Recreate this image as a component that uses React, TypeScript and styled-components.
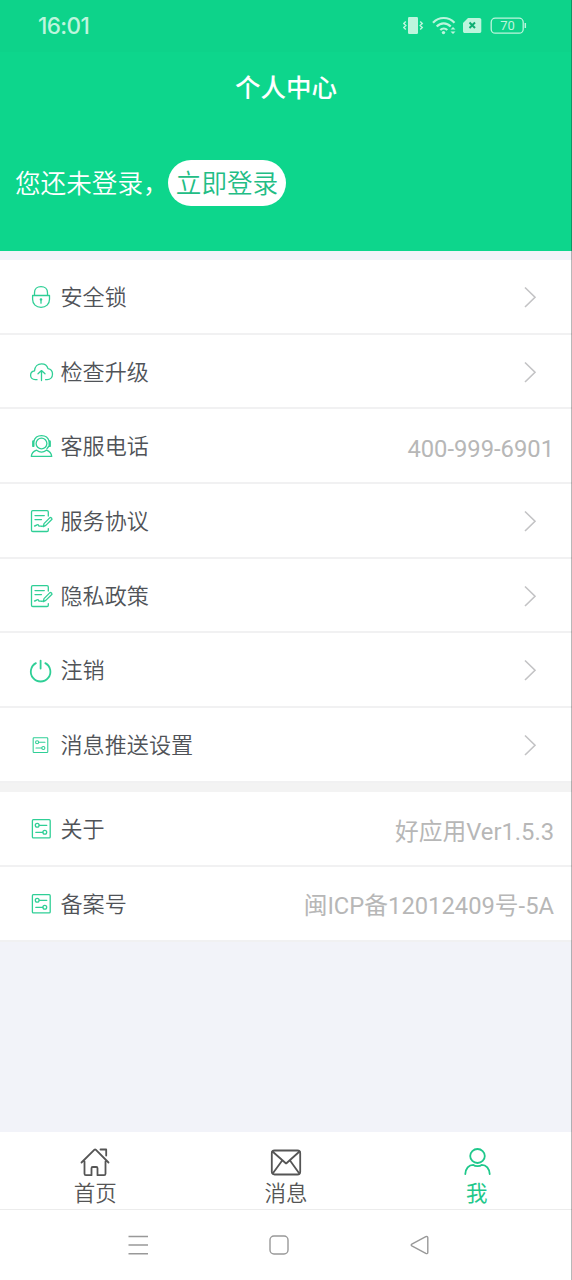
import React from 'react';
import styled, { createGlobalStyle } from 'styled-components';

const GREEN = '#0dd68c';
const ICON_GREEN = '#2fcf96';

const GlobalStyle = createGlobalStyle`
  * { box-sizing: border-box; }
  body {
    margin: 0;
    background: #f2f3f9;
    font-family: Roboto, 'Noto Sans CJK SC', sans-serif;
  }
`;

const Screen = styled.div`
  position: relative;
  display: flex;
  flex-direction: column;
  width: 572px;
  height: 1280px;
  overflow: hidden;
  background: #f2f3f9;
`;

const ScreenEdge = styled.div`
  position: absolute;
  top: 0;
  right: 0;
  width: 1px;
  height: 100%;
  background: rgba(0, 0, 0, 0.28);
`;

const Header = styled.header`
  display: flex;
  flex-direction: column;
  height: 251px;
  flex: none;
  background: ${GREEN};
  color: #fff;
`;

const StatusBar = styled.div`
  display: flex;
  align-items: center;
  justify-content: space-between;
  height: 52px;
  padding: 0 45px 0 38px;
  background: #0dd38a;
  color: #bdf5dd;
`;

const Clock = styled.span`
  font: 500 22.5px/26px Inter, sans-serif;
  letter-spacing: -0.6px;
`;

const StatusIcons = styled.svg`
  display: block;
  width: 124px;
  height: 24px;
`;

const Title = styled.h1`
  margin: 0;
  height: 72px;
  text-align: center;
  font-size: 25.5px;
  line-height: 73px;
  font-weight: 500;
`;

const LoginRow = styled.div`
  display: flex;
  align-items: center;
  height: 46px;
  margin-top: 36px;
  padding-left: 15px;
  font-size: 25.6px;
`;

const LoginHint = styled.span`
  width: 153px;
  padding-bottom: 3px;
  white-space: nowrap;
  font-weight: 350;
`;

const LoginButton = styled.button`
  width: 118px;
  height: 46px;
  padding: 0;
  border: 0;
  border-radius: 23px;
  background: #fff;
  color: #22bd85;
  font: inherit;
  font-weight: 350;
  line-height: 48px;
`;

const Group = styled.section<{ $gap: string; $space: number }>`
  padding-top: ${(p) => p.$space}px;
  background: ${(p) => p.$gap};
`;

const Row = styled.div`
  display: flex;
  align-items: center;
  height: 74.7px;
  padding: 1px 18px 0 28px;
  border-bottom: 2px solid #f1f1f2;
  background: #fff;
`;

const RowIcon = styled.svg`
  width: 26px;
  height: 26px;
  margin-right: 6.5px;
  fill: none;
  stroke: ${ICON_GREEN};
  stroke-width: 1.3;
  stroke-linecap: round;
  stroke-linejoin: round;
`;

const Label = styled.span`
  flex: 1;
  color: #505358;
  font-size: 22.1px;
  font-weight: 350;
  line-height: 30px;
`;

const Value = styled.span`
  padding-top: 5px;
  color: #b7b7b7;
  font-size: 23.75px;
  font-weight: 400;
  line-height: 30px;
`;

const Chevron = styled.svg`
  width: 14px;
  height: 24px;
  margin-right: 17px;
  fill: none;
  stroke: #c3c3c5;
  stroke-width: 1.6;
`;

const Spacer = styled.div`
  flex: 1;
`;

const TabBar = styled.nav`
  display: grid;
  grid-template-columns: repeat(3, 1fr);
  height: 78px;
  flex: none;
  border-bottom: 1px solid #ececec;
  background: #fff;
`;

const Tab = styled.div<{ $active?: boolean }>`
  display: flex;
  flex-direction: column;
  align-items: center;
  padding-top: 13px;
  color: ${(p) => (p.$active ? '#1fc88b' : '#555')};
  font-size: 21.5px;
  font-weight: ${(p) => (p.$active ? 400 : 350)};
  line-height: 30px;

  svg {
    width: 34px;
    height: 34px;
    flex: none;
    fill: none;
    stroke: currentColor;
    stroke-width: 1.8;
    stroke-linejoin: round;
    stroke-linecap: round;
  }
`;

const SystemNav = styled.div`
  display: flex;
  align-items: center;
  justify-content: space-between;
  height: 70px;
  flex: none;
  padding: 0 140px 0 126px;
  background: #fff;

  svg {
    width: 24px;
    height: 24px;
    fill: none;
    stroke: #999;
    stroke-width: 1.4;
    stroke-linejoin: round;
  }
`;

const LockIcon = () => (
  <RowIcon viewBox="0 0 26 26">
    <path d="M4.600 11.500h16.900v3.700c0 4.800-3.500 8.200-8.450 8.200S4.600 20 4.600 15.200zM6.500 11.500V8.700c0-3.600 2.600-6 6.500-6s6.500 2.400 6.500 6v2.800M13 16.600v2.600" />
    <circle cx="13" cy="15.500" r=".7" />
  </RowIcon>
);

const CloudIcon = () => (
  <RowIcon viewBox="0 0 26 26">
    <path d="M9 20.700H7.300C4.300 20.700 2.600 18.700 2.600 16.300c0-2.400 1.700-4.100 3.900-4.400C6.800 7.600 9.700 4.800 13.500 4.800c3.300 0 5.700 1.800 6.500 4.900 2.700.5 4.500 2.700 4.500 5.300 0 3.300-2.200 5.700-5.400 5.700h-1.500M13.500 21.500v-9.700M10 14.800l3.500-3.200 3.500 3.200" />
  </RowIcon>
);

const SupportIcon = () => (
  <RowIcon viewBox="0 0 26 26">
    <circle cx="13.500" cy="10.500" r="5.400" />
    <path d="M5.800 8.300c1-3.600 4-5.600 7.700-5.600s6.700 2 7.700 5.600M8.600 17.200c-3 1-5 3.200-5.300 6.200h20.400c-.3-3-2.300-5.200-5.300-6.200-2.900 2.200-6.900 2.200-9.800 0zM20.600 13.500l-1.600 2.200" />
    <path d="M5.300 8.400v4.500M21.700 8.400v4.500" strokeWidth="2.400" />
  </RowIcon>
);

const DocumentIcon = () => (
  <RowIcon viewBox="0 0 26 26">
    <path d="M20.300 8V4c0-.8-.5-1.300-1.300-1.300H4.800c-.8 0-1.300.5-1.300 1.300v18.200c0 .8.500 1.300 1.300 1.300H19c.8 0 1.300-.5 1.300-1.300v-1.600M7 7.600h9.300M7 11.600h6.500M6.500 18c1.700-.1 2.500-1.800 3.500-1.400.9.300.4 1.700 1.500 1.600 1.300-.1 1.700.2 3-.1M15.300 18.600l.7-3 6.200-6.200c1.300.2 1.800.9 1.800 1.900l-6.200 6.100z" />
  </RowIcon>
);

const PowerGlyph = styled(RowIcon)`
  stroke-width: 1.8;
`;

const PowerIcon = () => (
  <PowerGlyph viewBox="0 0 26 26">
    <path d="M12.600 3.600v8M7.900 6.100a9.800 9.800 0 1 0 9.400 0" />
  </PowerGlyph>
);

const SettingsIcon = ({ small = false }: { small?: boolean }) => (
  <RowIcon viewBox={small ? '-1.700 -3.200 31.700 31.700' : '0.200 0 26 26'}>
    <rect x="4.600" y="3.700" width="17.800" height="18.200" rx="1" />
    <circle cx="9.400" cy="9.300" r="1.900" />
    <circle cx="17" cy="16.300" r="1.900" />
    <path d="M11.500 9.300H19M8 16.300h7" />
  </RowIcon>
);

const Arrow = () => (
  <Chevron viewBox="0 0 14 24">
    <path d="M2 2.500l10 9.800L2 22" />
  </Chevron>
);

type Item = { icon: React.ReactNode; label: string; value?: string };

const mainItems: Item[] = [
  { icon: <LockIcon />, label: '安全锁' },
  { icon: <CloudIcon />, label: '检查升级' },
  { icon: <SupportIcon />, label: '客服电话', value: '400-999-6901' },
  { icon: <DocumentIcon />, label: '服务协议' },
  { icon: <DocumentIcon />, label: '隐私政策' },
  { icon: <PowerIcon />, label: '注销' },
  { icon: <SettingsIcon small />, label: '消息推送设置' },
];

const infoItems: Item[] = [
  { icon: <SettingsIcon />, label: '关于', value: '好应用Ver1.5.3' },
  { icon: <SettingsIcon />, label: '备案号', value: '闽ICP备12012409号-5A' },
];

const renderRow = (item: Item) => (
  <Row key={item.label}>
    {item.icon}
    <Label>{item.label}</Label>
    {item.value ? <Value>{item.value}</Value> : <Arrow />}
  </Row>
);

export default function App() {
  return (
    <Screen>
      <GlobalStyle />
      <Header>
        <StatusBar>
          <Clock>16:01</Clock>
          <StatusIcons viewBox="0 0 124 24" fill="none" stroke="currentColor">
            <rect x="5" y="3" width="10" height="17" rx="1.200" fill="currentColor" stroke="none" />
            <path d="M2.800 7.500L.8 9.500l2 2-2 2 2 2M17.200 7.500l2 2-2 2 2 2-2 2" strokeWidth="1.500" />
            <path d="M30 8.700c6-6.300 15.500-6.300 21.500 0M33.700 12.500c4-4.300 10-4.300 14 0M37.300 16c2-2 5-2 7 0" strokeWidth="2.200" />
            <circle cx="40.500" cy="18.600" r="1.700" fill="currentColor" stroke="none" />
            <path d="M47.500 15.500l2.500-2.500 2.500 2.500zM47.500 17.500l2.500 2.500 2.500-2.500z" fill="currentColor" stroke="none" />
            <path d="M65 4h11.500c1 0 1.800.8 1.800 1.800v11.400c0 1-.8 1.800-1.800 1.800H61.800c-1 0-1.800-.8-1.800-1.800V9z" fill="currentColor" stroke="none" />
            <path d="M66.500 8.500l5.500 5.500M72 8.500L66.500 14" stroke="#0dae72" strokeWidth="2" />
            <rect x="88.200" y="4.200" width="32" height="15" rx="4" strokeWidth="1.300" />
            <path d="M122.300 9v5" strokeWidth="1.500" />
            <text x="104.500" y="16.300" textAnchor="middle" fontFamily="Roboto" fontSize="13" fill="currentColor" stroke="none">70</text>
          </StatusIcons>
        </StatusBar>
        <Title>个人中心</Title>
        <LoginRow>
          <LoginHint>您还未登录，</LoginHint>
          <LoginButton>立即登录</LoginButton>
        </LoginRow>
      </Header>

      <Group $gap="#f2f3f9" $space={9}>{mainItems.map(renderRow)}</Group>
      <Group $gap="#f3f3f3" $space={9.5}>{infoItems.map(renderRow)}</Group>

      <Spacer />

      <TabBar>
        <Tab>
          <svg viewBox="0 0 34 34">
            <path d="M3.500 17.500L16.500 4.700c.4-.4.800-.4 1.200 0L30.500 17.500M6.500 16.500v12.300c0 .9.500 1.400 1.400 1.400h5.600v-7c0-.8.500-1.200 1.200-1.200h3.600c.8 0 1.200.4 1.200 1.200v7h6.600c.9 0 1.400-.5 1.400-1.400V16.500M22.500 4.500h5.700v6" />
          </svg>
          首页
        </Tab>
        <Tab>
          <svg viewBox="0 0 34 34">
            <rect x="2.800" y="5.500" width="28.400" height="24" rx="2.800" />
            <path d="M3.500 6.500l13 11.500c.4.400.8.400 1.200 0L30.500 6.500M3.700 28.500l9.500-13M30.300 28.500l-9.300-13" />
          </svg>
          消息
        </Tab>
        <Tab $active>
          <svg viewBox="0 0 34 34">
            <ellipse cx="17.500" cy="11" rx="7.300" ry="7" />
            <path d="M5.300 29c.3-5.200 3.400-9.200 8-9.200 1.800 1.700 6.600 1.700 8.400 0 4.600 0 7.700 4 8 9.200" />
          </svg>
          我
        </Tab>
      </TabBar>

      <SystemNav>
        <svg viewBox="0 0 24 24"><path d="M2.500 3.500h19.500M2.500 12h19.500M2.500 20.700h19.500" /></svg>
        <svg viewBox="0 0 24 24"><rect x="3" y="3" width="18" height="18" rx="4" /></svg>
        <svg viewBox="0 0 24 24"><path d="M3.800 11.200l14-7.500c1.200-.6 2 0 2 1v14.700c0 1-.8 1.600-2 1l-14-7.500c-.8-.5-.8-1.200 0-1.700z" /></svg>
      </SystemNav>
      <ScreenEdge />
    </Screen>
  );
}
